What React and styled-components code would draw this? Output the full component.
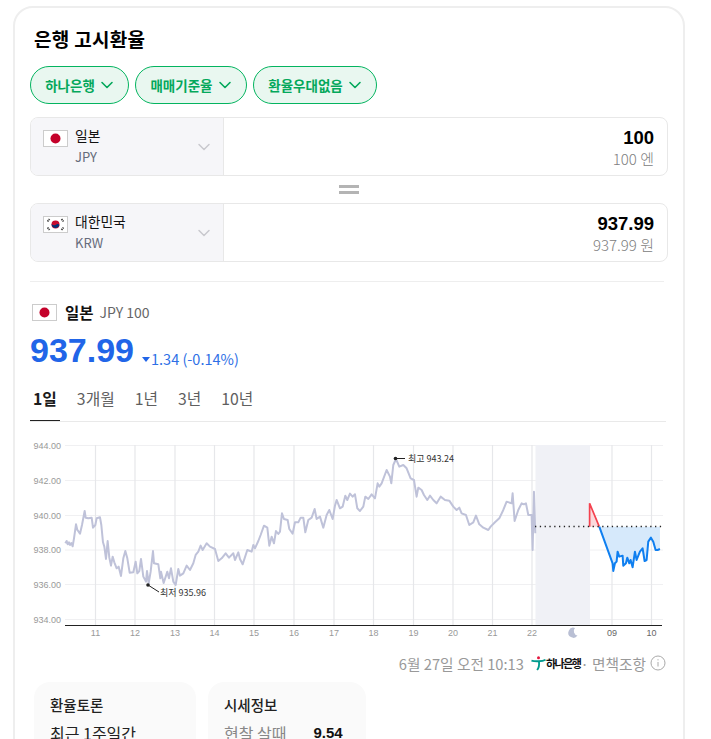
import React from 'react';
import styled, { createGlobalStyle } from 'styled-components';

const GlobalStyle = createGlobalStyle`
    html, body {
        margin: 0;
        height: 739px;
        overflow: hidden;
        background: #fff;
        font-family: "Noto Sans CJK KR", "Noto Sans", sans-serif;
    }
`;

const Card = styled.div`
    box-sizing: border-box;
    width: 672px;
    margin: 6px 0 0 13px;
    padding: 16px 15px 0 15px;
    border: 2px solid #eee;
    border-radius: 20px;
    height: 800px;
`;

const Title = styled.h2`
    margin: 0 0 0 4px;
    height: 30px;
    font-size: 19px;
    line-height: 30px;
    font-weight: 700;
    color: #000;
    letter-spacing: 0.3px;
`;

const PillRow = styled.div`
    display: flex;
    gap: 6px;
    margin-top: 12px;
`;

const Pill = styled.button`
    display: flex;
    align-items: center;
    justify-content: center;
    gap: 5px;
    box-sizing: border-box;
    width: ${p => p.$w}px;
    height: 38px;
    padding: 0;
    border: 1px solid #03b45f;
    border-radius: 19px;
    background: #e9f7f0;
    color: #04a85b;
    font-family: inherit;
    font-size: 13.5px;
    font-weight: 700;
`;

const Converter = styled.div`
    display: flex;
    box-sizing: border-box;
    width: 638px;
    height: 59px;
    margin-top: ${p => p.$top}px;
    border: 1px solid #e8e8e8;
    border-radius: 8px;
    overflow: hidden;
`;

const Picker = styled.div`
    display: flex;
    align-items: center;
    box-sizing: border-box;
    width: 193px;
    padding: 0 12px;
    background: #f6f6f9;
    border-right: 1px solid #e8e8e8;
`;

const FlagBox = styled.span`
    display: block;
    align-self: flex-start;
    flex: none;
    width: 25px;
    height: 17px;
    margin-top: 12px;
    line-height: 0;
`;

const PickerText = styled.div`
    flex: 1;
    margin-left: 7px;
    line-height: 20px;
`;

const CountryName = styled.div`
    margin: -2px 0 2px;
    font-size: 13.8px;
    color: #111;
`;

const CurrencyCode = styled.div`
    font-size: 13px;
    color: #666c7c;
`;

const Amounts = styled.div`
    flex: 1;
    padding: 9px 13px 0 0;
    text-align: right;
`;

const Amount = styled.div`
    font-family: "Liberation Sans", sans-serif;
    font-size: 18.5px;
    line-height: 22px;
    font-weight: 700;
    color: #000;
`;

const AmountUnit = styled.div`
    font-size: 15px;
    line-height: 20px;
    font-weight: 300;
    color: #808080;
`;

const EqualSign = styled.div`
    box-sizing: border-box;
    width: 20px;
    height: 9px;
    margin: 9px auto -18px 309px;
    border-top: 3px solid #b4b4b4;
    border-bottom: 3px solid #b4b4b4;
`;

const Divider = styled.hr`
    width: 634px;
    height: 1px;
    margin: 19px 0 0;
    border: 0;
    background: #eee;
`;

const StockHead = styled.div`
    display: flex;
    align-items: center;
    margin: 20px 0 0 2px;
    height: 20px;
`;

const StockName = styled.span`
    margin-left: 8px;
    font-size: 15.5px;
    font-weight: 700;
    color: #111;
`;

const StockCode = styled.span`
    margin-left: 6px;
    font-size: 14px;
    color: #666;
`;

const PriceRow = styled.div`
    display: flex;
    align-items: baseline;
    height: 44px;
    margin-top: 7px;
`;

const Price = styled.span`
    font-family: "Liberation Sans", sans-serif;
    font-size: 34px;
    line-height: 42px;
    font-weight: 700;
    color: #2165e8;
`;

const Change = styled.span`
    display: flex;
    align-items: center;
    margin-left: 8px;
    font-size: 14.5px;
    color: #2e6fe6;
`;

const DownMark = styled.i`
    width: 0;
    height: 0;
    margin: 2px 1px 0 0;
    border: 4px solid transparent;
    border-top: 5px solid #2165e8;
    border-bottom: 0;
`;

const Tabs = styled.div`
    display: flex;
    gap: 20px;
    width: 636px;
    height: 35px;
    margin-top: 13px;
    border-bottom: 1px solid #e9e9e9;
`;

const Tab = styled.div`
    height: 35px;
    box-sizing: border-box;
    padding: 0 ${p => (p.$active ? 3 : 0)}px;
    margin-right: ${p => (p.$active ? -3 : 0)}px;
    font-size: 15.8px;
    line-height: 26px;
    font-weight: ${p => (p.$active ? 700 : 400)};
    color: ${p => (p.$active ? '#1c1c1c' : '#5f5f5f')};
    border-bottom: ${p => (p.$active ? '1px solid #222' : 0)};
`;

const ChartBox = styled.div`
    margin: 13px 0 0 -10px;
    height: 205px;
    line-height: 0;
`;

const Stamp = styled.div`
    display: flex;
    align-items: center;
    justify-content: flex-end;
    width: 636px;
    height: 24px;
    margin-top: 11px;
    font-size: 14.7px;
    color: #999;
`;

const BankMark = styled.span`
    display: inline-flex;
    align-items: center;
    margin: 0 0 0 7px;
    font-size: 11px;
    font-weight: 700;
    letter-spacing: -1.5px;
    color: #111;
`;

const InfoIcon = styled.span`
    display: flex;
    margin-left: 4px;
`;

const InfoCards = styled.div`
    display: flex;
    gap: 12px;
    margin: 7px 0 0 4px;
`;

const InfoCard = styled.div`
    box-sizing: border-box;
    width: ${p => p.$w}px;
    height: 120px;
    padding: 13px 16px;
    border-radius: 16px;
    background: #fafafa;
`;

const InfoTitle = styled.div`
    font-size: 14.5px;
    line-height: 20px;
    font-weight: 500;
    color: #222;
`;

const InfoLine = styled.div`
    display: flex;
    gap: 27px;
    margin-top: 7px;
    font-size: 16px;
    line-height: 22px;
    color: ${p => (p.$muted ? '#888' : '#222')};
`;

const InfoValue = styled.b`
    color: #111;
    font-size: 15px;
    font-family: "Liberation Sans", sans-serif;
`;

const Chevron = ({ color = '#04a85b', size = 14, width = 1.6 }) => (
    <svg width={size} height={size} viewBox="0 0 14 14" fill="none">
        <path d="M2 4.5 7 9.5 12 4.5" stroke={color} strokeWidth={width} strokeLinecap="round" strokeLinejoin="round" />
    </svg>
);

const JapanFlag = () => (
    <svg width="25" height="17" viewBox="0 0 25 17">
        <rect x="0.5" y="0.5" width="24" height="16" fill="#fff" stroke="#ccc" />
        <circle cx="12.5" cy="8.5" r="5" fill="#c4012a" />
    </svg>
);

const KoreaFlag = () => (
    <svg width="25" height="17" viewBox="0 0 25 17">
        <rect x="0.5" y="0.5" width="24" height="16" fill="#fff" stroke="#ccc" />
        <circle cx="12.5" cy="8.5" r="4" fill="#c60c30" />
        <path d="M8.6 7.8a4 4 0 0 0 7.8 1.4c-.6-1.5-2.4-1.6-3.2-.6-.9 1.1-3.6 1.1-4.6-.8z" fill="#003478" />
        <g stroke="#444" strokeWidth="1.8" strokeDasharray="1.5 .6">
            <path d="M4.5 5.5 6.5 3" />
            <path d="M18.5 3 20.5 5.5" />
            <path d="M4.5 11.5 6.5 14" />
            <path d="M18.5 14 20.5 11.5" />
        </g>
    </svg>
);

const HanaLogo = () => (
    <svg width="15" height="16" viewBox="0 0 16 16">
        <circle cx="8" cy="2.5" r="1.6" fill="#e4173e" />
        <path d="M0.5 5.5C4 6.5 12 6.5 15.5 4.5" fill="none" stroke="#009b8e" strokeWidth="2" />
        <path d="M8.5 6.5C9 10 8.5 13 6.5 15.5" fill="none" stroke="#009b8e" strokeWidth="2" />
    </svg>
);

const yLabels = [
    ['944.00', 445.5],
    ['942.00', 480.5],
    ['940.00', 515.5],
    ['938.00', 550],
    ['936.00', 584.5],
    ['934.00', 619.5],
];

const xLabels = [
    ['11', 95.5], ['12', 135], ['13', 175], ['14', 214.5], ['15', 254], ['16', 294],
    ['17', 334], ['18', 373.5], ['19', 413.5], ['20', 453], ['21', 492.5], ['22', 532],
    ['09', 612], ['10', 651.5],
];

// traced off the reference, units are 1/3 px from (20, 435)
const historyLeft = [
    [136, 325], [140, 318], [143, 328], [147, 322], [150, 330], [154, 324], [158, 334], [162, 310], [168, 268],
    [172, 285], [176, 290], [180, 296], [186, 270], [194, 228], [197, 248], [205, 250], [215, 248], [219, 278],
    [226, 270], [230, 250], [240, 247], [244, 270], [249, 322], [253, 335], [258, 372], [263, 318], [268, 368],
    [273, 392], [278, 365], [283, 382], [290, 400], [296, 395], [303, 423], [310, 370], [316, 348], [322, 370],
    [329, 413], [340, 412], [347, 380], [352, 415], [358, 408], [363, 372], [370, 425], [378, 440], [381, 408],
    [386, 445], [392, 410], [399, 348], [402, 385], [415, 388], [421, 430], [423, 410], [431, 444], [442, 410],
    [447, 430], [453, 400], [460, 440], [467, 450], [475, 402], [480, 422], [490, 415], [500, 392], [510, 405],
    [520, 385], [527, 360], [535, 350], [542, 332], [548, 345], [560, 325], [570, 335], [585, 342], [595, 378],
    [605, 370], [617, 355], [627, 368], [640, 355], [645, 375], [655, 352], [660, 372], [668, 388], [682, 345],
    [695, 350], [700, 330], [705, 340], [715, 318], [722, 300], [732, 272], [742, 278], [748, 332], [755, 305],
    [762, 325], [768, 288], [775, 297], [780, 290], [786, 235], [792, 252], [803, 255], [808, 282], [818, 296],
    [825, 262], [835, 262], [842, 248], [850, 248], [856, 292], [865, 255], [875, 248], [884, 222], [890, 252],
    [900, 245], [910, 278], [920, 240], [928, 225], [938, 252], [945, 212], [950, 195],
];

const historyRight = [
    [0, 220], [8, 215], [16, 182], [22, 195], [30, 176], [38, 185], [45, 178], [52, 220], [60, 228], [70, 215],
    [76, 185], [85, 192], [95, 178], [105, 190], [113, 145], [118, 155], [125, 145], [140, 105], [150, 125],
    [154, 145], [160, 90], [168, 72], [178, 95], [190, 90], [200, 100], [212, 130], [222, 135], [230, 185],
    [235, 158], [245, 165], [252, 180], [262, 195], [270, 182], [280, 195], [290, 205], [302, 185], [315, 195],
    [328, 197], [340, 215], [350, 225], [358, 218], [365, 235], [378, 240], [388, 270], [400, 262], [408, 242],
    [418, 268], [430, 278], [445, 285], [452, 275], [465, 262], [478, 250], [490, 225], [500, 200], [515, 205],
    [518, 175], [524, 258], [535, 225], [545, 205], [552, 208], [558, 205], [565, 240], [575, 240], [578, 345],
    [582, 170], [586, 295],
];

const todayBlue = [
    [778, 275], [818, 385], [820, 408], [825, 385], [830, 380], [833, 350], [838, 365], [848, 362], [850, 392],
    [858, 385], [862, 368], [868, 385], [872, 375], [878, 397], [885, 350], [890, 375], [900, 350], [908, 340],
    [914, 378], [920, 375], [925, 320], [933, 308], [940, 320], [947, 345], [953, 345], [960, 342],
];

const toPoints = list => list.map(p => p.join(',')).join(' ');

// the right half was traced from a crop starting 320px further along
const history = [...historyLeft, ...historyRight.map(([x, y]) => [x + 960, y])];

const RateChart = () => (
    <svg width="650" height="205" viewBox="20 435 650 205">
        {yLabels.map(([label, y]) => (
            <g key={label}>
                <line x1="65" x2="663" y1={y} y2={y} stroke="#f0f0f2" />
                <text x="61" y={y + 3} textAnchor="end" fontSize="9" fill="#999" fontFamily="Liberation Sans">{label}</text>
            </g>
        ))}
        {xLabels.map(([label, x]) => (
            <g key={label}>
                <line x1={x} x2={x} y1="445" y2="625" stroke="#e6e7ea" strokeWidth="1.2" />
                <text x={x} y="636" textAnchor="middle" fontSize="9" fill={label === '09' || label === '10' ? '#666' : '#999'} fontFamily="Liberation Sans">{label}</text>
            </g>
        ))}
        <rect x="535.5" y="445" width="54.5" height="180" fill="#f0f1f6" />
        <path d="M575 628a5 5 0 1 0 2.5 7.5 4.5 4.5 0 0 1-2.5-7.5z" fill="#b9bfd4" />
        <line x1="65" x2="662" y1="625.5" y2="625.5" stroke="#222" />
        <g transform="translate(20 435) scale(0.3333)">
            <polyline points={toPoints(history)} fill="none" stroke="#bfc2d9" strokeWidth="6" strokeLinejoin="round" />
            <g transform="translate(960 0)">
                <polygon points="749,275 749,205 778,275" fill="#fbd9dc" />
                <polyline points="749,275 749,205 778,275" fill="none" stroke="#f4424f" strokeWidth="5" />
                <polygon points={toPoints(todayBlue) + ' 960,275'} fill="#d6e9fb" />
                <polyline points={toPoints(todayBlue)} fill="none" stroke="#0f7ff0" strokeWidth="6" strokeLinejoin="round" />
            </g>
        </g>
        <line x1="535" x2="663" y1="526.5" y2="526.5" stroke="#222" strokeWidth="1.3" strokeDasharray="1.3 3.5" />
        <circle cx="148" cy="585" r="1.8" fill="#222" />
        <line x1="148" x2="159" y1="585" y2="592" stroke="#222" />
        <text x="160" y="596" fontSize="9" fill="#333" fontFamily="Noto Sans CJK KR">최저 935.96</text>
        <circle cx="395.5" cy="458.5" r="1.8" fill="#222" />
        <line x1="395" x2="405" y1="458.5" y2="458.5" stroke="#222" />
        <text x="408" y="461.5" fontSize="9" fill="#333" fontFamily="Noto Sans CJK KR">최고 943.24</text>
    </svg>
);

const App = () => (
    <>
        <GlobalStyle />
        <Card>
            <Title>은행 고시환율</Title>
            <PillRow>
                <Pill $w={99}>하나은행<Chevron /></Pill>
                <Pill $w={112}>매매기준율<Chevron /></Pill>
                <Pill $w={124}>환율우대없음<Chevron /></Pill>
            </PillRow>
            <Converter $top={13}>
                <Picker>
                    <FlagBox><JapanFlag /></FlagBox>
                    <PickerText>
                        <CountryName>일본</CountryName>
                        <CurrencyCode>JPY</CurrencyCode>
                    </PickerText>
                    <Chevron color="#c9c9ce" size={14} width={1.5} />
                </Picker>
                <Amounts>
                    <Amount>100</Amount>
                    <AmountUnit>100 엔</AmountUnit>
                </Amounts>
            </Converter>
            <EqualSign />
            <Converter $top={27}>
                <Picker>
                    <FlagBox><KoreaFlag /></FlagBox>
                    <PickerText>
                        <CountryName>대한민국</CountryName>
                        <CurrencyCode>KRW</CurrencyCode>
                    </PickerText>
                    <Chevron color="#c9c9ce" size={14} width={1.5} />
                </Picker>
                <Amounts>
                    <Amount>937.99</Amount>
                    <AmountUnit>937.99 원</AmountUnit>
                </Amounts>
            </Converter>
            <Divider />
            <StockHead>
                <JapanFlag />
                <StockName>일본</StockName>
                <StockCode>JPY 100</StockCode>
            </StockHead>
            <PriceRow>
                <Price>937.99</Price>
                <Change><DownMark />1.34 (-0.14%)</Change>
            </PriceRow>
            <Tabs>
                <Tab $active>1일</Tab>
                <Tab>3개월</Tab>
                <Tab>1년</Tab>
                <Tab>3년</Tab>
                <Tab>10년</Tab>
            </Tabs>
            <ChartBox><RateChart /></ChartBox>
            <Stamp>
                6월 27일 오전 10:13
                <BankMark><HanaLogo />하나은행</BankMark>
                · 면책조항
                <InfoIcon>
                    <svg width="16" height="16" viewBox="0 0 16 16" fill="none" stroke="#aaa">
                        <circle cx="8" cy="8" r="7" />
                        <path d="M8 7v4.5M8 4.2v1.2" />
                    </svg>
                </InfoIcon>
            </Stamp>
            <InfoCards>
                <InfoCard $w={162}>
                    <InfoTitle>환율토론</InfoTitle>
                    <InfoLine>최근 1주일간</InfoLine>
                </InfoCard>
                <InfoCard $w={158}>
                    <InfoTitle>시세정보</InfoTitle>
                    <InfoLine $muted>현찰 살때<InfoValue>9.54</InfoValue></InfoLine>
                </InfoCard>
            </InfoCards>
        </Card>
    </>
);

export default App;
